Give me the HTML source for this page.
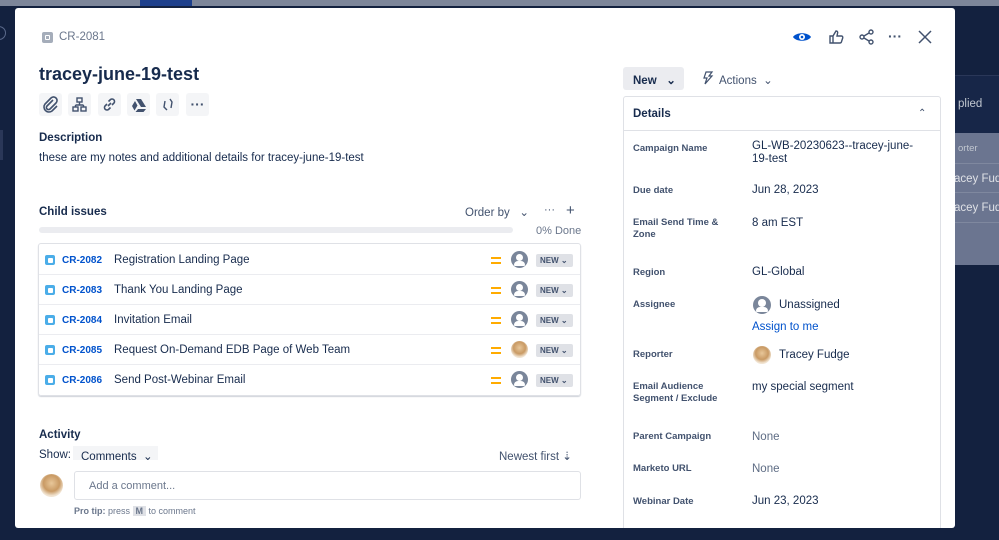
<!DOCTYPE html>
<html><head><meta charset="utf-8"><style>
*{box-sizing:border-box;margin:0;padding:0}
html,body{width:999px;height:540px;overflow:hidden}
body{background:#13213f;font-family:"Liberation Sans",sans-serif;color:#172b4d;position:relative}
.a{position:absolute;white-space:nowrap}
.lbl{font-size:9.5px;font-weight:bold;color:#42526e;position:absolute;left:633px;line-height:12px}
.val{font-size:11.5px;color:#172b4d;position:absolute;left:752px;line-height:13px;white-space:nowrap}
.row{position:absolute;left:39px;width:541px;height:30px;border-bottom:1px solid #ebecf0}
.row .ic{position:absolute;left:6px;top:10px;width:10px;height:10px;background:#4bade8;border-radius:2px}
.row .ic:after{content:"";position:absolute;left:3px;top:3px;width:5px;height:5px;background:#fff;border-radius:1px}
.row .key{position:absolute;left:23px;top:10px;font-size:10px;color:#0052cc;font-weight:bold}
.row .t{position:absolute;left:75px;top:9px;font-size:11.5px;white-space:nowrap}
.row .pr{position:absolute;left:452px;top:12px;width:10px;height:2px;background:#ffab00;box-shadow:0 5px 0 #ffab00}
.row .av{position:absolute;left:472px;top:6px;width:17px;height:17px;border-radius:50%;background:#7a869a;overflow:hidden}
.row .av.p:before{content:"";position:absolute;left:5px;top:3px;width:7px;height:7px;border-radius:50%;background:#fff}
.row .av.p:after{content:"";position:absolute;left:3px;top:10px;width:11px;height:5px;border-radius:4px 4px 1px 1px;background:#fff}
.row .st{position:absolute;left:497px;top:9px;width:37px;height:13px;background:#dfe1e6;border-radius:2px;font-size:8px;font-weight:bold;color:#42526e;padding:2px 0 0 4px;white-space:nowrap}
.ib{position:absolute;top:93px;width:23px;height:23px;background:#f4f5f7;border-radius:3px}
.gav,.row .av.gav{border-radius:50%;background:radial-gradient(circle at 50% 40%,#e8c79a 0,#c99a64 45%,#f1e4d2 70%)}
</style></head><body>
<div class="a" style="left:0;top:0;width:999px;height:6px;background:#7d869a"></div>
<div class="a" style="left:140px;top:0;width:52px;height:6px;background:#1d3f8c"></div>
<div class="a" style="left:955px;top:75px;width:44px;height:58px;background:#172648;border-top:1px solid #2a3758"></div>
<div class="a" style="left:955px;top:133px;width:44px;height:132px;background:#6b7590;overflow:hidden">
<div class="a" style="left:3px;top:10px;font-size:9.5px;color:#c1c7d0">orter</div>
<div class="a" style="left:-1px;top:40px;font-size:11.5px;color:#dfe1e6">acey Fudge</div>
<div class="a" style="left:-1px;top:69px;font-size:11.5px;color:#dfe1e6">acey Fudge</div>
<div class="a" style="left:0;top:30px;width:44px;height:1px;background:#7f889f"></div>
<div class="a" style="left:0;top:59px;width:44px;height:1px;background:#7f889f"></div>
<div class="a" style="left:0;top:89px;width:44px;height:1px;background:#7f889f"></div>
</div>
<div class="a" style="left:958px;top:98px;font-size:11.5px;color:#c1c7d0">plied</div>
<div class="a" style="left:-8px;top:26px;width:14px;height:14px;border:1px solid #5b6a8c;border-radius:50%"></div>
<div class="a" style="left:0;top:130px;width:3px;height:30px;background:#2a3758"></div>

<div class="a" style="left:15px;top:8px;width:940px;height:520px;background:#fff;border-radius:3px;overflow:hidden">
<div class="a" style="left:608px;top:88px;width:318px;height:460px;border:1px solid #dfe1e6;border-radius:3px"></div>
<div class="a" style="left:608px;top:122px;width:318px;height:1px;background:#dfe1e6"></div>
</div>
<div class="a" style="left:42px;top:32px;width:11px;height:11px;background:#a5adba;border-radius:2px"></div>
<div class="a" style="left:45px;top:35px;width:5px;height:5px;border:1px solid #fff;border-radius:1px"></div>
<div class="a" style="left:59px;top:31px;font-size:11.5px;color:#6b778c">CR-2081</div>
<div class="a" style="left:39px;top:64px;font-size:18px;font-weight:bold;color:#172b4d">tracey-june-19-test</div>
<div class="ib" style="left:39px"><svg width="23" height="23" viewBox="0 0 23 23"><path d="M14 7l-6 6a2 2 0 0 0 3 3l6-6a3.5 3.5 0 0 0-5-5l-6 6a5 5 0 0 0 7 7l5-5" fill="none" stroke="#42526e" stroke-width="1.6"/></svg></div>
<div class="ib" style="left:68px"><svg width="23" height="23"><rect x="9" y="5" width="5" height="4" fill="none" stroke="#42526e" stroke-width="1.4"/><rect x="5" y="14" width="5" height="4" fill="none" stroke="#42526e" stroke-width="1.4"/><rect x="13" y="14" width="5" height="4" fill="none" stroke="#42526e" stroke-width="1.4"/><path d="M11.5 9v3M7.5 12h8M7.5 12v2M15.5 12v2" stroke="#42526e" stroke-width="1.4" fill="none"/></svg></div>
<div class="ib" style="left:98px"><svg width="23" height="23"><path d="M10 13l3-3M9 11l-2 2a2.5 2.5 0 0 0 3.5 3.5l2-2M14 12l2-2a2.5 2.5 0 0 0-3.5-3.5l-2 2" stroke="#42526e" stroke-width="1.6" fill="none"/></svg></div>
<div class="ib" style="left:127px"><svg width="23" height="23"><path d="M9 6h5l5 8h-5z M8 8l2.5 4.5-3 5L5 13z M11 16h8l-2.5 3h-8z" fill="#42526e"/></svg></div>
<div class="ib" style="left:156px"><svg width="23" height="23"><path d="M9 8l-1 6 3 3M14 6l2 3-1 6" stroke="#42526e" stroke-width="1.4" fill="none"/></svg></div>
<div class="ib" style="left:186px;font-size:14px;font-weight:bold;color:#42526e;text-align:center;line-height:22px">···</div>
<div class="a" style="left:39px;top:132px;font-size:11.5px;font-weight:bold">Description</div>
<div class="a" style="left:39px;top:152px;font-size:11.5px">these are my notes and additional details for tracey-june-19-test</div>
<div class="a" style="left:39px;top:206px;font-size:11.5px;font-weight:bold">Child issues</div>
<div class="a" style="left:465px;top:205px;font-size:11.5px;color:#42526e">Order by &nbsp;&nbsp;⌄</div>
<div class="a" style="left:544px;top:204px;font-size:11px;color:#42526e">···</div>
<div class="a" style="left:566px;top:202px;font-size:15px;color:#42526e">+</div>
<div class="a" style="left:39px;top:227px;width:474px;height:6px;background:#ebecf0;border-radius:3px"></div>
<div class="a" style="left:536px;top:225px;font-size:11px;color:#6b778c">0% Done</div>
<div class="a" style="left:38px;top:243px;width:543px;height:153px;border:1px solid #dfe1e6;border-radius:3px;box-shadow:0 1px 1px rgba(9,30,66,.2)"></div>
<div class="row" style="top:245px"><div class="ic"></div><div class="key">CR-2082</div><div class="t">Registration Landing Page</div><div class="pr"></div><div class="av p"></div><div class="st">NEW ⌄</div></div>
<div class="row" style="top:275px"><div class="ic"></div><div class="key">CR-2083</div><div class="t">Thank You Landing Page</div><div class="pr"></div><div class="av p"></div><div class="st">NEW ⌄</div></div>
<div class="row" style="top:305px"><div class="ic"></div><div class="key">CR-2084</div><div class="t">Invitation Email</div><div class="pr"></div><div class="av p"></div><div class="st">NEW ⌄</div></div>
<div class="row" style="top:335px"><div class="ic"></div><div class="key">CR-2085</div><div class="t">Request On-Demand EDB Page of Web Team</div><div class="pr"></div><div class="av gav"></div><div class="st">NEW ⌄</div></div>
<div class="row" style="top:365px;border-bottom:none"><div class="ic"></div><div class="key">CR-2086</div><div class="t">Send Post-Webinar Email</div><div class="pr"></div><div class="av p"></div><div class="st">NEW ⌄</div></div>
<div class="a" style="left:39px;top:429px;font-size:11.5px;font-weight:bold">Activity</div>
<div class="a" style="left:39px;top:449px;font-size:11.5px">Show:</div>
<div class="a" style="left:73px;top:446px;width:85px;height:14px;background:#f4f5f7;font-size:11.5px;padding:3px 0 0 8px">Comments &nbsp;⌄</div>
<div class="a" style="left:499px;top:449px;font-size:11.5px;color:#42526e">Newest first ⇣</div>
<div class="a gav" style="left:40px;top:474px;width:23px;height:23px"></div>
<div class="a" style="left:74px;top:471px;width:507px;height:29px;border:1px solid #dfe1e6;border-radius:3px;font-size:11px;color:#6b778c;padding:8px 0 0 14px">Add a comment...</div>
<div class="a" style="left:74px;top:506px;font-size:9px;color:#6b778c"><b>Pro tip:</b> press <span style="background:#dfe1e6;padding:0 3px;font-weight:bold">M</span> to comment</div>

<svg class="a" style="left:792px;top:29px" width="20" height="16"><path d="M1 8C4 3 16 3 19 8C16 13 4 13 1 8z" fill="#0052cc"/><circle cx="10" cy="8" r="3" fill="#fff"/><circle cx="10" cy="8" r="1.3" fill="#0052cc"/></svg>
<svg class="a" style="left:827px;top:28px" width="18" height="18"><path d="M3 8h3v7H3zM6 8l3-5c1.5 0 2 1 1.5 2.5L10 8h4.5c1 0 1.5 1 1.2 2l-1.3 4c-.3.8-1 1-1.6 1H6" fill="none" stroke="#42526e" stroke-width="1.4"/></svg>
<svg class="a" style="left:858px;top:28px" width="18" height="18"><circle cx="4" cy="9" r="2" fill="none" stroke="#42526e" stroke-width="1.4"/><circle cx="13" cy="4" r="2" fill="none" stroke="#42526e" stroke-width="1.4"/><circle cx="13" cy="14" r="2" fill="none" stroke="#42526e" stroke-width="1.4"/><path d="M6 8l5-3M6 10l5 3" stroke="#42526e" stroke-width="1.4"/></svg>
<div class="a" style="left:888px;top:28px;font-size:14px;font-weight:bold;color:#42526e">···</div>
<svg class="a" style="left:918px;top:30px" width="14" height="14"><path d="M1 1l12 12M13 1L1 13" stroke="#42526e" stroke-width="1.5"/></svg>

<div class="a" style="left:623px;top:67px;width:61px;height:23px;background:#ebecf0;border-radius:3px;font-size:11.5px;font-weight:bold;padding:6px 0 0 10px">New &nbsp;&nbsp;⌄</div>
<svg class="a" style="left:700px;top:71px" width="14" height="14"><path d="M6 1h6l-3 4h3l-7 8 2-6H4z" fill="none" stroke="#42526e" stroke-width="1.2"/></svg>
<div class="a" style="left:719px;top:73px;font-size:11.5px;color:#42526e">Actions &nbsp;⌄</div>
<div class="a" style="left:633px;top:108px;font-size:11.5px;font-weight:bold">Details</div>
<div class="a" style="left:918px;top:108px;font-size:10px;color:#42526e">⌃</div>

<div class="lbl" style="top:143px">Campaign Name</div><div class="val" style="top:140px">GL-WB-20230623--tracey-june-<br>19-test</div>
<div class="lbl" style="top:185px">Due date</div><div class="val" style="top:184px">Jun 28, 2023</div>
<div class="lbl" style="top:217px">Email Send Time &amp;<br>Zone</div><div class="val" style="top:217px">8 am EST</div>
<div class="lbl" style="top:267px">Region</div><div class="val" style="top:266px">GL-Global</div>
<div class="lbl" style="top:299px">Assignee</div>
<div class="a" style="left:753px;top:296px;width:18px;height:18px;border-radius:50%;background:#7a869a;overflow:hidden"><div class="a" style="left:5px;top:3px;width:8px;height:8px;border-radius:50%;background:#fff"></div><div class="a" style="left:3px;top:11px;width:12px;height:5px;border-radius:4px 4px 1px 1px;background:#fff"></div></div>
<div class="val" style="left:779px;top:299px">Unassigned</div>
<div class="val" style="top:321px;color:#0052cc">Assign to me</div>
<div class="lbl" style="top:349px">Reporter</div>
<div class="a gav" style="left:753px;top:346px;width:18px;height:18px"></div>
<div class="val" style="left:779px;top:349px">Tracey Fudge</div>
<div class="lbl" style="top:381px">Email Audience<br>Segment / Exclude</div><div class="val" style="top:381px">my special segment</div>
<div class="lbl" style="top:431px">Parent Campaign</div><div class="val" style="top:431px;color:#5e6c84">None</div>
<div class="lbl" style="top:463px">Marketo URL</div><div class="val" style="top:463px;color:#5e6c84">None</div>
<div class="lbl" style="top:496px">Webinar Date</div><div class="val" style="top:495px">Jun 23, 2023</div>
</body></html>
